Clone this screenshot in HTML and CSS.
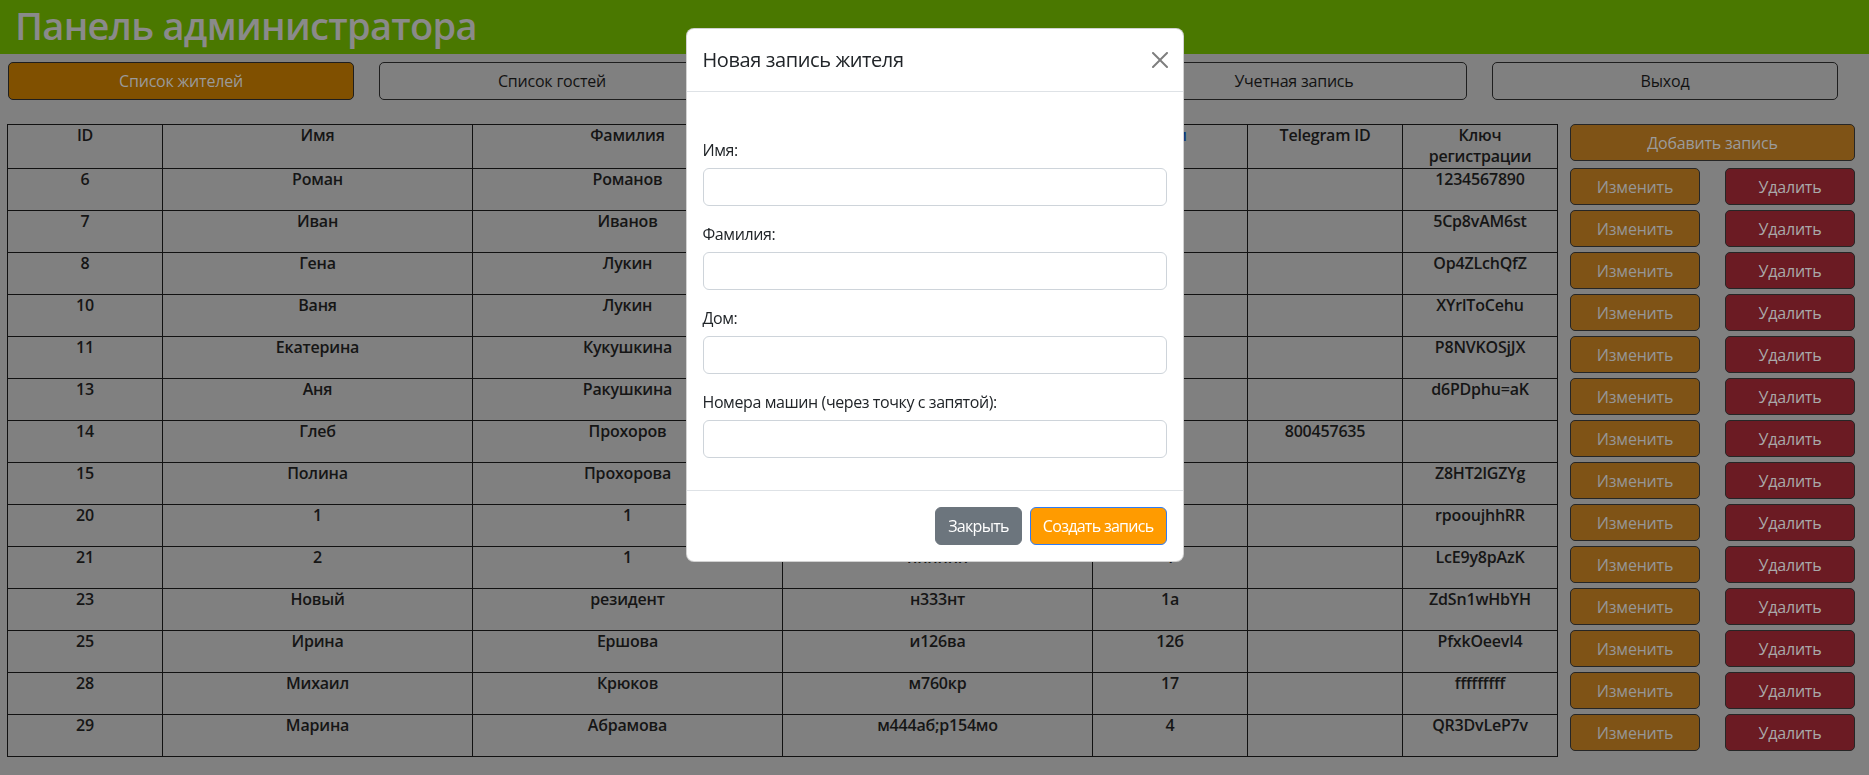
FILE: index.html
```html
<!DOCTYPE html>
<html lang="ru">
<head>
<meta charset="utf-8">
<title>Панель администратора</title>
<link rel="stylesheet" href="styles.css">
</head>
<body>
<header class="topbar">
  <h1 class="title">Панель администратора</h1>
</header>
<nav class="nav">
  <button class="nav-btn active">Список жителей</button>
  <button class="nav-btn">Список гостей</button>
  <button class="nav-btn">Журнал</button>
  <button class="nav-btn">Учетная запись</button>
  <button class="nav-btn">Выход</button>
</nav>
<main class="content">
  <table class="residents">
    <colgroup>
      <col class="c2"><col class="c4"><col class="c4"><col class="c4"><col class="c2"><col class="c2"><col class="c2">
    </colgroup>
    <thead>
      <tr><th>ID</th><th>Имя</th><th>Фамилия</th><th><span class="link">Номера машин</span></th><th><span class="link">Дом</span></th><th>Telegram ID</th><th>Ключ<br>регистрации</th></tr>
    </thead>
    <tbody>
      <tr><td>6</td><td>Роман</td><td>Романов</td><td>а123аа</td><td>1</td><td></td><td>1234567890</td></tr>
      <tr><td>7</td><td>Иван</td><td>Иванов</td><td>в456вв</td><td>2</td><td></td><td>5Cp8vAM6st</td></tr>
      <tr><td>8</td><td>Гена</td><td>Лукин</td><td>е789ее</td><td>3</td><td></td><td>Op4ZLchQfZ</td></tr>
      <tr><td>10</td><td>Ваня</td><td>Лукин</td><td>к111кк</td><td>3</td><td></td><td>XYrlToCehu</td></tr>
      <tr><td>11</td><td>Екатерина</td><td>Кукушкина</td><td>м222мм</td><td>5</td><td></td><td>P8NVKOSjJX</td></tr>
      <tr><td>13</td><td>Аня</td><td>Ракушкина</td><td>о333оо</td><td>6</td><td></td><td>d6PDphu=aK</td></tr>
      <tr><td>14</td><td>Глеб</td><td>Прохоров</td><td>р444рр</td><td>7</td><td>800457635</td><td></td></tr>
      <tr><td>15</td><td>Полина</td><td>Прохорова</td><td>р444рр</td><td>7</td><td></td><td>Z8HT2lGZYg</td></tr>
      <tr><td>20</td><td>1</td><td>1</td><td>1</td><td>1</td><td></td><td>rpooujhhRR</td></tr>
      <tr><td>21</td><td>2</td><td>1</td><td>нннннн</td><td>1</td><td></td><td>LcE9y8pAzK</td></tr>
      <tr><td>23</td><td>Новый</td><td>резидент</td><td>н333нт</td><td>1а</td><td></td><td>ZdSn1wHbYH</td></tr>
      <tr><td>25</td><td>Ирина</td><td>Ершова</td><td>и126ва</td><td>12б</td><td></td><td>PfxkOeevl4</td></tr>
      <tr><td>28</td><td>Михаил</td><td>Крюков</td><td>м760кр</td><td>17</td><td></td><td>fffffffff</td></tr>
      <tr><td>29</td><td>Марина</td><td>Абрамова</td><td>м444аб;р154мо</td><td>4</td><td></td><td>QR3DvLeP7v</td></tr>
    </tbody>
  </table>
  <div class="actions">
    <button class="act add">Добавить запись</button>
    <button class="act edit">Изменить</button><button class="act del">Удалить</button>
    <button class="act edit">Изменить</button><button class="act del">Удалить</button>
    <button class="act edit">Изменить</button><button class="act del">Удалить</button>
    <button class="act edit">Изменить</button><button class="act del">Удалить</button>
    <button class="act edit">Изменить</button><button class="act del">Удалить</button>
    <button class="act edit">Изменить</button><button class="act del">Удалить</button>
    <button class="act edit">Изменить</button><button class="act del">Удалить</button>
    <button class="act edit">Изменить</button><button class="act del">Удалить</button>
    <button class="act edit">Изменить</button><button class="act del">Удалить</button>
    <button class="act edit">Изменить</button><button class="act del">Удалить</button>
    <button class="act edit">Изменить</button><button class="act del">Удалить</button>
    <button class="act edit">Изменить</button><button class="act del">Удалить</button>
    <button class="act edit">Изменить</button><button class="act del">Удалить</button>
    <button class="act edit">Изменить</button><button class="act del">Удалить</button>
  </div>
</main>

<div class="modal">
  <div class="modal-dialog">
    <div class="modal-content">
      <div class="modal-header">
        <h5 class="modal-title">Новая запись жителя</h5>
        <button class="btn-close" aria-label="Закрыть">
          <svg viewBox="0 0 16 16" width="16" height="16"><path d="M.293.293a1 1 0 0 1 1.414 0L8 6.586 14.293.293a1 1 0 1 1 1.414 1.414L9.414 8l6.293 6.293a1 1 0 0 1-1.414 1.414L8 9.414l-6.293 6.293a1 1 0 0 1-1.414-1.414L6.586 8 .293 1.707a1 1 0 0 1 0-1.414z"/></svg>
        </button>
      </div>
      <div class="modal-body">
        <div class="field">
          <label class="form-label" for="f-name">Имя:</label>
          <input class="form-control" id="f-name" type="text">
        </div>
        <div class="field">
          <label class="form-label" for="f-surname">Фамилия:</label>
          <input class="form-control" id="f-surname" type="text">
        </div>
        <div class="field">
          <label class="form-label" for="f-house">Дом:</label>
          <input class="form-control" id="f-house" type="text">
        </div>
        <div class="field">
          <label class="form-label" for="f-cars">Номера машин (через точку с запятой):</label>
          <input class="form-control" id="f-cars" type="text">
        </div>
      </div>
      <div class="modal-footer">
        <button class="btn btn-secondary">Закрыть</button>
        <button class="btn btn-primary">Создать запись</button>
      </div>
    </div>
  </div>
</div>
</body>
</html>
```
FILE: styles.css
```css
* { box-sizing: border-box; }

html, body {
  margin: 0;
  width: 1869px;
  height: 775px;
  overflow: hidden;
}

body {
  background: #808080;
  font-family: "Open Sans", "Noto Sans", sans-serif;
  font-size: 16px;
  color: #141414;
}

button { font-family: inherit; cursor: pointer; }

/* top bar */
.topbar {
  background: #4a7800;
  height: 54px;
  padding-left: 15px;
}
.title {
  margin: 0;
  font-size: 38px;
  font-weight: 600;
  line-height: 50px;
  color: #8a8a8a;
  letter-spacing: -0.7px;
}

/* navigation */
.nav {
  display: flex;
  gap: 25px;
  padding: 8px 0 0 8px;
}
.nav-btn {
  width: 346px;
  height: 38px;
  border: 1px solid #1e1e1e;
  border-radius: 5px;
  background: transparent;
  color: #121212;
  font-size: 16px;
  letter-spacing: -0.2px;
}
.nav-btn.active {
  background: #805000;
  color: #9a9a9a;
}

/* content */
.content {
  display: flex;
  gap: 12px;
  padding: 24px 0 0 7px;
  align-items: flex-start;
}

.residents {
  width: 1551px;
  border-collapse: collapse;
  table-layout: fixed;
}
.residents .c2 { width: 155px; }
.residents .c4 { width: 310px; }

.residents th,
.residents td {
  border: 1px solid #111;
  padding: 0;
  text-align: center;
  vertical-align: top;
  font-weight: 600;
  font-size: 16px;
  line-height: 21px;
  color: #151515;
  letter-spacing: -0.2px;
}
.residents thead tr { height: 44px; }
.residents tbody tr { height: 42px; }
.residents .link { color: #08367a; }

/* right action column */
.actions {
  width: 285px;
  display: grid;
  grid-template-columns: 130px 130px;
  justify-content: space-between;
  row-gap: 5px;
}
.act {
  height: 37px;
  border: 1px solid #262626;
  border-radius: 5px;
  font-size: 16px;
  color: #969696;
  letter-spacing: -0.2px;
}
.act.add {
  grid-column: 1 / -1;
  margin-bottom: 2px;
  background: #7f5316;
  color: #9b9b9b;
}
.act.edit { background: #7f5316; }
.act.del { background: #6b1b23; color: #a9a9a9; }

/* modal */
.modal {
  position: fixed;
  inset: 0;
}
.modal-dialog {
  width: 498px;
  margin: 28px auto 0;
  font-family: "Open Sans", "Noto Sans", sans-serif;
  color: #212529;
  letter-spacing: -0.4px;
}
.modal-content {
  background: #fff;
  border: 1px solid rgba(0, 0, 0, 0.175);
  border-radius: 8px;
  overflow: hidden;
}
.modal-header {
  display: flex;
  align-items: center;
  justify-content: space-between;
  padding: 16px;
  border-bottom: 1px solid #dee2e6;
}
.modal-title {
  margin: 0;
  font-size: 20px;
  font-weight: 500;
  line-height: 30px;
  letter-spacing: -0.4px;
}
.btn-close {
  width: 16px;
  height: 16px;
  padding: 0;
  margin-right: -1px;
  border: 0;
  background: transparent;
  display: flex;
  opacity: 0.5;
}
.btn-close svg { fill: #000; display: block; }

.modal-body {
  padding: 46px 16px 16px;
}
.field { margin-bottom: 16px; }
.form-label {
  display: block;
  font-size: 16px;
  line-height: 24px;
  margin-bottom: 6px;
}
.form-control {
  display: block;
  width: 100%;
  height: 38px;
  border: 1px solid #ced4da;
  border-radius: 6px;
  background: #fff;
  font: inherit;
  padding: 6px 12px;
}

.modal-footer {
  display: flex;
  justify-content: flex-end;
  gap: 8px;
  padding: 16px;
  border-top: 1px solid #dee2e6;
}
.btn {
  height: 38px;
  padding: 6px 12px;
  border-radius: 6px;
  font-size: 16px;
  line-height: 24px;
  color: #fff;
  border: 1px solid transparent;
  letter-spacing: -0.7px;
}
.btn-secondary { background: #6c757d; border-color: #6c757d; }
.btn-primary { background: #ff9b00; border-color: #2f7cf6; }
```
